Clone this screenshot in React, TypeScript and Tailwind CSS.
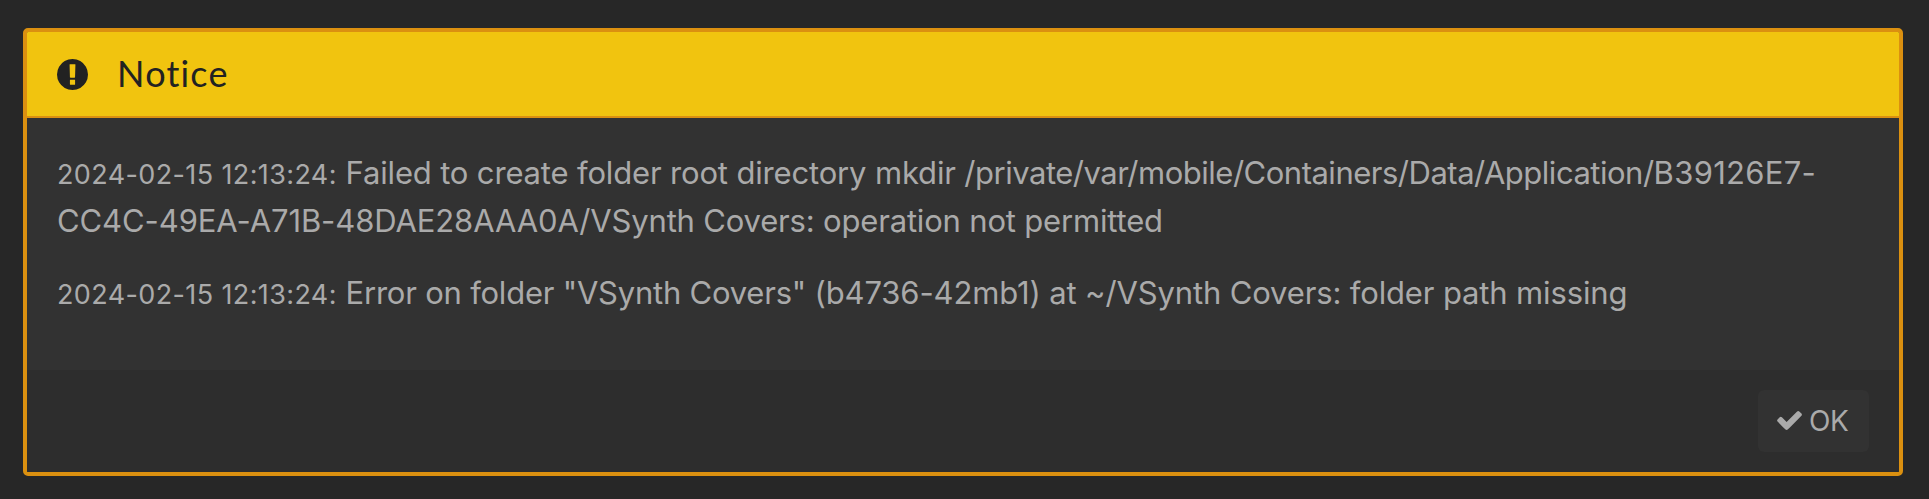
import React from 'react';

interface Notice {
  when: string;
  lines: { text: string; className: string }[][];
}

const notices: Notice[] = [
  {
    when: '2024-02-15 12:13:24:',
    lines: [
      [
        { text: 'Failed to create folder root directory mkdir ', className: 'tracking-[-0.16px]' },
        { text: '/private/var/mobile/Containers/Data/Application/', className: 'tracking-[-0.49px]' },
        { text: 'B39126E7-', className: 'tracking-[0.3px]' },
      ],
      [
        { text: 'CC4C-49EA-A71B-48DAE28AAA0A/', className: 'tracking-[-0.1px]' },
        { text: 'VSynth Covers: operation not permitted', className: 'tracking-[-0.18px]' },
      ],
    ],
  },
  {
    when: '2024-02-15 12:13:24:',
    lines: [
      [
        { text: 'Error on folder "VSynth Covers" ', className: 'tracking-[-0.22px]' },
        { text: '(b4736-42mb1) at ~/VSynth Covers: folder path missing', className: 'tracking-[-0.14px]' },
      ],
    ],
  },
];

function ExclamationIcon() {
  return (
    <svg className="h-[31px] w-[31px]" viewBox="128 128 1536 1536" fill="currentColor">
      <path d="M896 128q209 0 385.5 103t279.5 279.5 103 385.5-103 385.5-279.5 279.5-385.5 103-385.5-103-279.5-279.5-103-385.5 103-385.5 279.5-279.5 385.5-103zm128 1247v-190q0-14-9-23.5t-22-9.5h-192q-13 0-23 10t-10 23v190q0 13 10 23t23 10h192q13 0 22-9.5t9-23.5zm-2-344l18-621q0-12-10-18-10-8-24-8h-220q-14 0-24 8-10 6-10 18l17 621q0 10 10 17.5t24 7.5h185q14 0 23.5-7.5t10.5-17.5z" />
    </svg>
  );
}

function CheckIcon() {
  return (
    <svg className="h-[19px] w-[25px]" viewBox="121 334 1550 1188" fill="currentColor">
      <path d="M1671 566q0 40-28 68l-724 724-136 136q-28 28-68 28t-68-28l-136-136-362-362q-28-28-28-68t28-68l136-136q28-28 68-28t68 28l294 295 656-657q28-28 68-28t68 28l136 136q28 28 28 68z" />
    </svg>
  );
}

export default function App() {
  return (
    <div className="h-[499px] bg-[#272727] px-[23px] pt-7 font-['Inter',sans-serif] text-[#aaaaaa]">
      <div className="flex h-[448px] w-[1880px] flex-col overflow-hidden rounded-[5px] border-4 border-[#db9010] bg-[#323232]">
        <div className="flex h-[86px] items-center border-b-2 border-[#db9010] bg-[#f1c40f] pl-[30px] text-[#222222]">
          <ExclamationIcon />
          <h3 className="ml-[29px] pb-[3px] font-['Lato',sans-serif] text-[36px] leading-none tracking-[1.2px]">Notice</h3>
        </div>

        <div className="h-[252px] pl-[30px] pt-[31px]">
          {notices.map((notice, i) => (
            <p key={i} className="mb-6 whitespace-nowrap text-[31px] leading-[48px]">
              <span className="text-[27px] leading-none tracking-[0.38px]">{notice.when}</span>{' '}
              {notice.lines.map((line, j) => (
                <React.Fragment key={j}>
                  {line.map((part) => (
                    <span key={part.text} className={part.className}>{part.text}</span>
                  ))}
                  <br />
                </React.Fragment>
              ))}
            </p>
          ))}
        </div>

        <div className="flex flex-1 items-start justify-end bg-[#2d2d2d] pr-[30px] pt-5">
          <button className="flex h-[62px] w-[111px] items-center rounded-[6px] bg-[#323232] pb-px pl-[19px] text-[28px] leading-none">
            <CheckIcon />
            <span className="ml-[7px] tracking-[-0.5px]">OK</span>
          </button>
        </div>
      </div>
    </div>
  );
}
